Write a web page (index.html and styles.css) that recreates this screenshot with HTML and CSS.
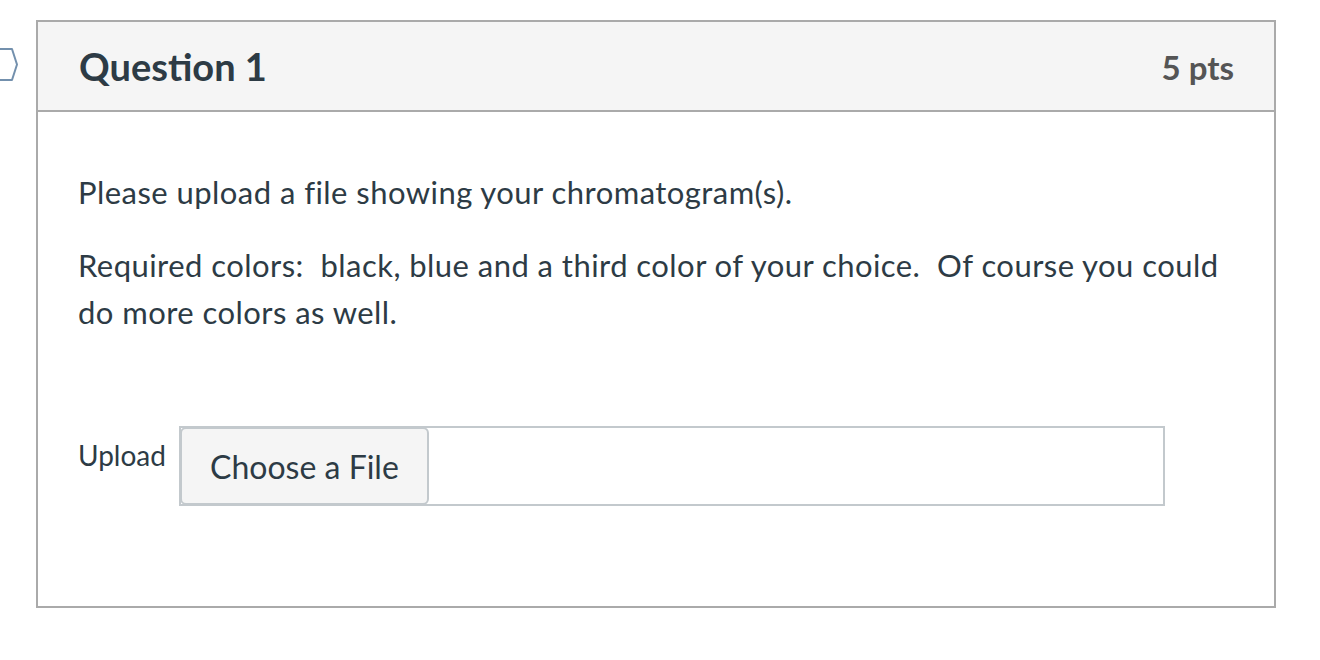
FILE: index.html
```html
<!DOCTYPE html>
<html>
<head>
<meta charset="utf-8">
<link rel="stylesheet" href="styles.css">
</head>
<body>
<div class="page">
  <div class="marker">
    <svg width="36" height="40" viewBox="0 0 36 40">
      <path d="M-10 1 H12 L17 16.5 L12 32 H-10 Z" fill="none" stroke="#7390ad" stroke-width="2" stroke-linejoin="round"/>
    </svg>
  </div>
  <div class="question">
    <div class="q-header">
      <h2 class="q-title">Question 1</h2>
      <span class="q-points">5 pts</span>
    </div>
    <div class="q-body">
      <p class="q-text">Please upload a file showing your chromatogram(s).</p>
      <p class="q-text">Required colors:&nbsp; black, blue and a third color of your choice.&nbsp; Of course you could do more colors as well.</p>
      <div class="upload-row">
        <span class="upload-label">Upload</span>
        <div class="file-box">
          <button class="file-btn">Choose a File</button>
        </div>
      </div>
    </div>
  </div>
</div>
</body>
</html>
```
FILE: styles.css
```css
html, body {
  margin: 0;
  padding: 0;
  background: #fff;
}
body {
  font-family: Lato, "Noto Sans", sans-serif;
  color: #2d3b45;
}
.page {
  display: flex;
  align-items: flex-start;
  padding-top: 20px;
}
.marker {
  width: 36px;
  flex: 0 0 36px;
  padding-top: 28px;
  overflow: hidden;
}
.marker svg {
  display: block;
}
.question {
  width: 1240px;
  box-sizing: border-box;
  border: 2px solid #aaaaaa;
}
.q-header {
  display: flex;
  justify-content: space-between;
  align-items: center;
  height: 88px;
  padding: 0 40px 0 41px;
  background: #f5f5f5;
  border-bottom: 2px solid #aaaaaa;
}
.q-title {
  margin: 0;
  font-size: 38px;
  font-weight: 700;
  color: #2d3b45;
}
.q-points {
  font-size: 33px;
  font-weight: 700;
  color: #555555;
  padding-top: 2px;
}
.q-body {
  padding: 57px 41px 100px 40px;
}
.q-text {
  margin: 0 0 26px 0;
  font-size: 31px;
  letter-spacing: 0.45px;
  line-height: 47px;
}
.upload-row {
  display: flex;
  align-items: flex-start;
  margin-top: 90px;
  gap: 13px;
}
.upload-label {
  font-size: 28px;
  line-height: 34px;
  padding-top: 12px;
}
.file-box {
  width: 986px;
  height: 80px;
  box-sizing: border-box;
  border: 2px solid #c3c9cd;
  display: flex;
}
.file-btn {
  margin: -1px 0 -1px -1px;
  width: 249px;
  font-family: Lato, "Noto Sans", sans-serif;
  font-size: 32px;
  color: #2d3b45;
  background: #f5f5f5;
  border: 2px solid #c3c9cd;
  border-radius: 6px;
  padding: 0;
}
```
